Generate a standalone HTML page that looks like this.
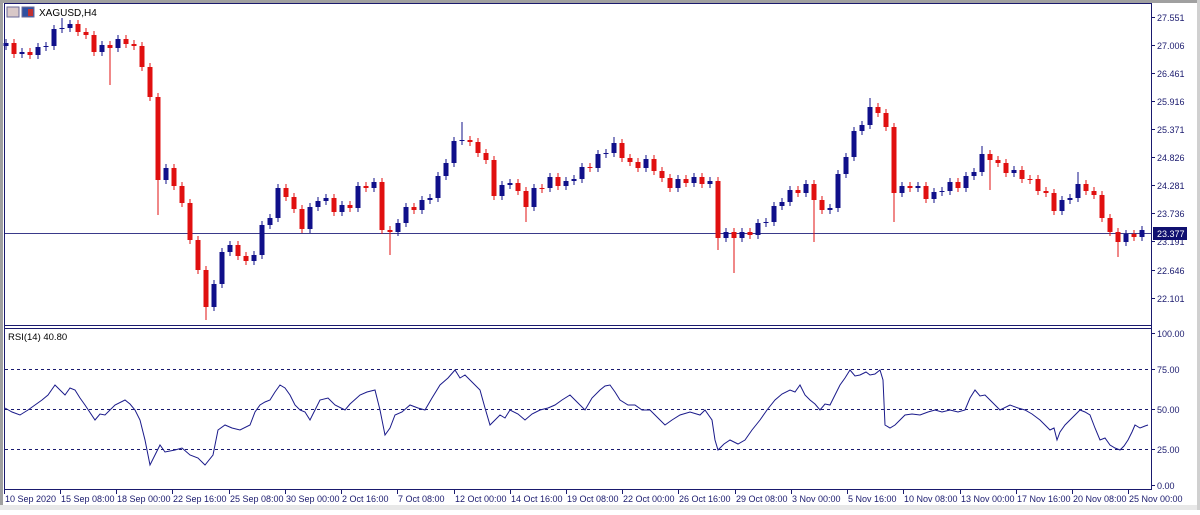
<!DOCTYPE html>
<html><head><meta charset="utf-8"><style>
body{margin:0;background:#fff;width:1200px;height:510px;overflow:hidden;}
svg text{font-family:"Liberation Sans",sans-serif;font-size:9px;fill:#1a1a6e}
</style></head><body>
<svg width="1200" height="510" xmlns="http://www.w3.org/2000/svg">
<rect x="0" y="0" width="1200" height="510" fill="#fff"/>
<rect x="0" y="0" width="1200" height="3" fill="#a0a0a0"/>
<rect x="0" y="0" width="3" height="510" fill="#a0a0a0"/>
<rect x="0" y="505" width="1200" height="5" fill="#e8e8e8"/>
<rect x="1197" y="0" width="3" height="510" fill="#d0d0d0"/>
<line x1="4" y1="3.5" x2="1152" y2="3.5" stroke="#1a1a6e"/>
<line x1="4.5" y1="3" x2="4.5" y2="490" stroke="#1a1a6e"/>
<line x1="1151.5" y1="3" x2="1151.5" y2="490" stroke="#1a1a6e"/>
<line x1="4" y1="325.5" x2="1152" y2="325.5" stroke="#1a1a6e"/>
<line x1="4" y1="328.5" x2="1152" y2="328.5" stroke="#1a1a6e"/>
<line x1="4" y1="489.5" x2="1152" y2="489.5" stroke="#1a1a6e"/>
<line x1="5" y1="369.5" x2="1151" y2="369.5" stroke="#1a1a6e" stroke-dasharray="3,3"/>
<line x1="5" y1="409.5" x2="1151" y2="409.5" stroke="#1a1a6e" stroke-dasharray="3,3"/>
<line x1="5" y1="449.5" x2="1151" y2="449.5" stroke="#1a1a6e" stroke-dasharray="3,3"/>
<line x1="5" y1="233.5" x2="1151" y2="233.5" stroke="#3a3a8a"/>

<path fill="none" stroke="#e01010" stroke-width="1" d="M14 39V58M30 48V59M78 20V36M86 28V39M94 31V56M110 41V85M126 35V48M134 40V50M142 42V71M150 63V101M158 93V215M174 164V190M182 182V207M190 199V244M198 236V274M206 266V320M238 241V260M246 252V265M286 184V201M294 193V213M302 205V233M334 194V216M350 201V212M366 182V192M382 178V234M390 226V255M414 203V214M470 136V146M478 138V157M486 149V164M494 156V200M518 179V195M526 187V222M542 184V193M558 173V190M590 163V172M622 139V162M630 154V166M638 158V172M654 155V175M662 167V182M670 174V192M686 175V187M702 173V188M718 177V250M734 228V273M750 228V239M798 186V197M814 180V242M822 196V214M878 103V117M886 109V131M894 123V222M910 182V192M926 182V203M958 178V192M990 150V190M998 156V167M1006 159V177M1022 166V183M1030 175V184M1038 175V195M1046 187V197M1054 189V215M1086 180V195M1094 187V199M1102 191V222M1110 214V236M1118 228V257M1134 230V241"/>
<path fill="none" stroke="#e01010" stroke-width="5" d="M14 43V54M30 52V55M78 24V32M86 32V35M94 35V52M110 45V48M126 39V44M134 44V46M142 46V67M150 67V97M158 97V180M174 168V186M182 186V203M190 203V240M198 240V270M206 270V307M238 245V256M246 256V261M286 188V197M294 197V209M302 209V229M334 198V212M350 205V208M366 186V188M382 182V230M390 230V232M414 207V210M470 140V142M478 142V153M486 153V160M494 160V196M518 183V191M526 191V207M542 188V189M558 177V186M590 167V168M622 143V158M630 158V162M638 162V168M654 159V171M662 171V178M670 178V188M686 179V183M702 177V184M718 181V238M734 232V238M750 232V235M798 190V193M814 184V200M822 200V210M878 107V113M886 113V127M894 127V193M910 186V188M926 186V199M958 182V188M990 154V160M998 160V163M1006 163V173M1022 170V179M1030 179V180M1038 179V191M1046 191V193M1054 193V211M1086 184V191M1094 191V195M1102 195V218M1110 218V232M1118 232V242M1134 234V237"/>
<path fill="none" stroke="#10108a" stroke-width="1" d="M6 39V50M22 48V58M38 43V59M46 42V51M54 25V50M62 18V33M70 20V32M102 41V56M118 35V52M166 164V184M214 280V311M222 248V288M230 241V256M254 251V265M262 221V259M270 214V229M278 184V222M310 203V233M318 197V211M326 194V205M342 201V216M358 182V212M374 178V192M398 219V236M406 203V227M422 196V214M430 194V204M438 172V202M446 159V180M454 137V167M462 122V145M502 181V200M510 179V189M534 184V211M550 173V192M566 177V190M574 175V185M582 163V183M598 150V172M606 149V158M614 137V157M646 155V172M678 175V192M694 173V187M710 177V188M726 228V242M742 228V242M758 219V239M766 218V227M774 202V226M782 198V210M790 186V206M806 180V197M830 204V214M838 170V212M846 153V178M854 127V161M862 121V135M870 98V129M902 182V197M918 182V192M934 188V203M942 187V196M950 178V195M966 172V192M974 168V180M982 146V176M1014 166V177M1062 196V215M1070 194V204M1078 172V202M1126 230V246M1142 226V241"/>
<path fill="none" stroke="#10108a" stroke-width="5" d="M6 43V46M22 52V54M38 47V55M46 46V47M54 29V46M62 28V29M70 24V28M102 45V52M118 39V48M166 168V180M214 284V307M222 252V284M230 245V252M254 255V261M262 225V255M270 218V225M278 188V218M310 207V229M318 201V207M326 198V201M342 205V212M358 186V208M374 182V188M398 223V232M406 207V223M422 200V210M430 198V200M438 176V198M446 163V176M454 141V163M462 140V141M502 185V196M510 183V185M534 188V207M550 177V188M566 181V186M574 179V181M582 167V179M598 154V168M606 153V154M614 143V153M646 159V168M678 179V188M694 177V183M710 181V184M726 232V238M742 232V238M758 223V235M766 222V223M774 206V222M782 202V206M790 190V202M806 184V193M830 208V210M838 174V208M846 157V174M854 131V157M862 125V131M870 107V125M902 186V193M918 186V188M934 192V199M942 191V192M950 182V191M966 176V188M974 172V176M982 154V172M1014 170V173M1062 200V211M1070 198V200M1078 184V198M1126 234V242M1142 230V237"/>

<polyline fill="none" stroke="#1a1a8a" stroke-width="1" points="5,408 12,412 20,415 28,410 35,405 42,400 48,395 55,385 60,390 65,395 70,388 75,390 80,398 85,405 95,420 100,414 105,415 115,405 125,400 130,404 135,410 140,420 145,440 150,465 155,455 160,445 165,452 175,450 182,448 190,455 198,458 205,465 213,455 218,430 225,425 232,428 240,430 250,425 255,412 260,405 265,402 270,400 275,392 280,385 285,388 290,395 295,405 300,410 305,412 310,420 315,410 320,400 328,398 335,405 345,410 350,404 360,395 367,392 375,390 380,410 385,435 390,428 395,415 402,412 410,405 418,408 425,410 432,398 440,385 448,378 455,370 460,378 465,375 472,382 480,390 485,408 490,425 500,415 505,418 510,410 518,414 525,420 532,414 540,410 548,408 555,405 562,400 570,395 577,402 585,410 592,398 600,390 605,386 610,385 615,392 620,400 628,405 635,405 642,410 650,410 658,418 665,425 672,420 680,415 690,412 700,415 705,410 712,420 715,440 718,450 724,444 730,440 738,444 745,440 752,430 760,420 767,410 775,400 782,394 790,390 795,392 800,385 805,395 810,400 815,404 820,410 825,404 830,405 835,395 840,385 845,378 850,370 855,376 860,375 866,372 870,375 875,374 880,370 883,380 885,425 890,428 895,425 900,420 905,415 912,414 920,415 928,412 935,410 942,412 950,410 958,412 965,410 970,398 975,390 980,396 985,395 990,400 995,405 1000,410 1010,405 1018,408 1025,410 1032,414 1040,420 1045,425 1050,430 1054,428 1057,440 1060,432 1065,425 1072,418 1080,410 1085,412 1090,415 1095,428 1100,440 1105,438 1110,445 1115,448 1120,450 1124,446 1128,440 1132,432 1135,425 1140,428 1145,426 1148,425"/>

<rect x="7" y="7" width="12" height="10" fill="#d8c8c8" stroke="#6a6a9a"/>
<rect x="22" y="7" width="12" height="10" fill="#3050a0" stroke="#6a6a9a"/>
<rect x="28" y="9" width="5" height="7" fill="#c03030"/>
<text x="39" y="16" style="font-size:10px;fill:#000">XAGUSD,H4</text>
<text x="8" y="340" style="font-size:9.5px;fill:#000">RSI(14) 40.80</text>

<g stroke="#1a1a6e">
<path d="M1151 17.5h4M1151 45.5h4M1151 73.5h4M1151 101.5h4M1151 129.5h4M1151 157.5h4M1151 185.5h4M1151 213.5h4M1151 241.5h4M1151 270.5h4M1151 298.5h4M1151 333.5h4M1151 369.5h4M1151 409.5h4M1151 449.5h4M1151 485.5h4"/>
<path d="M4.5 490v4M60.5 490v4M116.5 490v4M172.5 490v4M229.5 490v4M285.5 490v4M341.5 490v4M397.5 490v4M454.5 490v4M510.5 490v4M566.5 490v4M622.5 490v4M678.5 490v4M735.5 490v4M791.5 490v4M847.5 490v4M903.5 490v4M960.5 490v4M1016.5 490v4M1072.5 490v4M1128.5 490v4"/>
</g>
<text x="1157" y="21">27.551</text>
<text x="1157" y="49">27.006</text>
<text x="1157" y="77">26.461</text>
<text x="1157" y="105">25.916</text>
<text x="1157" y="133">25.371</text>
<text x="1157" y="161">24.826</text>
<text x="1157" y="189">24.281</text>
<text x="1157" y="217">23.736</text>
<text x="1157" y="245">23.191</text>
<text x="1157" y="274">22.646</text>
<text x="1157" y="302">22.101</text>
<text x="1157" y="337">100.00</text>
<text x="1157" y="373">75.00</text>
<text x="1157" y="413">50.00</text>
<text x="1157" y="453">25.00</text>
<text x="1157" y="489">0.00</text>
<rect x="1153" y="227" width="34" height="13" fill="#101070"/>
<text x="1157" y="237" style="fill:#fff">23.377</text>

<text x="5" y="502">10 Sep 2020</text>
<text x="61" y="502">15 Sep 08:00</text>
<text x="117" y="502">18 Sep 00:00</text>
<text x="173" y="502">22 Sep 16:00</text>
<text x="230" y="502">25 Sep 08:00</text>
<text x="286" y="502">30 Sep 00:00</text>
<text x="342" y="502">2 Oct 16:00</text>
<text x="398" y="502">7 Oct 08:00</text>
<text x="455" y="502">12 Oct 00:00</text>
<text x="511" y="502">14 Oct 16:00</text>
<text x="567" y="502">19 Oct 08:00</text>
<text x="623" y="502">22 Oct 00:00</text>
<text x="679" y="502">26 Oct 16:00</text>
<text x="736" y="502">29 Oct 08:00</text>
<text x="792" y="502">3 Nov 00:00</text>
<text x="848" y="502">5 Nov 16:00</text>
<text x="904" y="502">10 Nov 08:00</text>
<text x="961" y="502">13 Nov 00:00</text>
<text x="1017" y="502">17 Nov 16:00</text>
<text x="1073" y="502">20 Nov 08:00</text>
<text x="1129" y="502">25 Nov 00:00</text>
</svg>
</body></html>
